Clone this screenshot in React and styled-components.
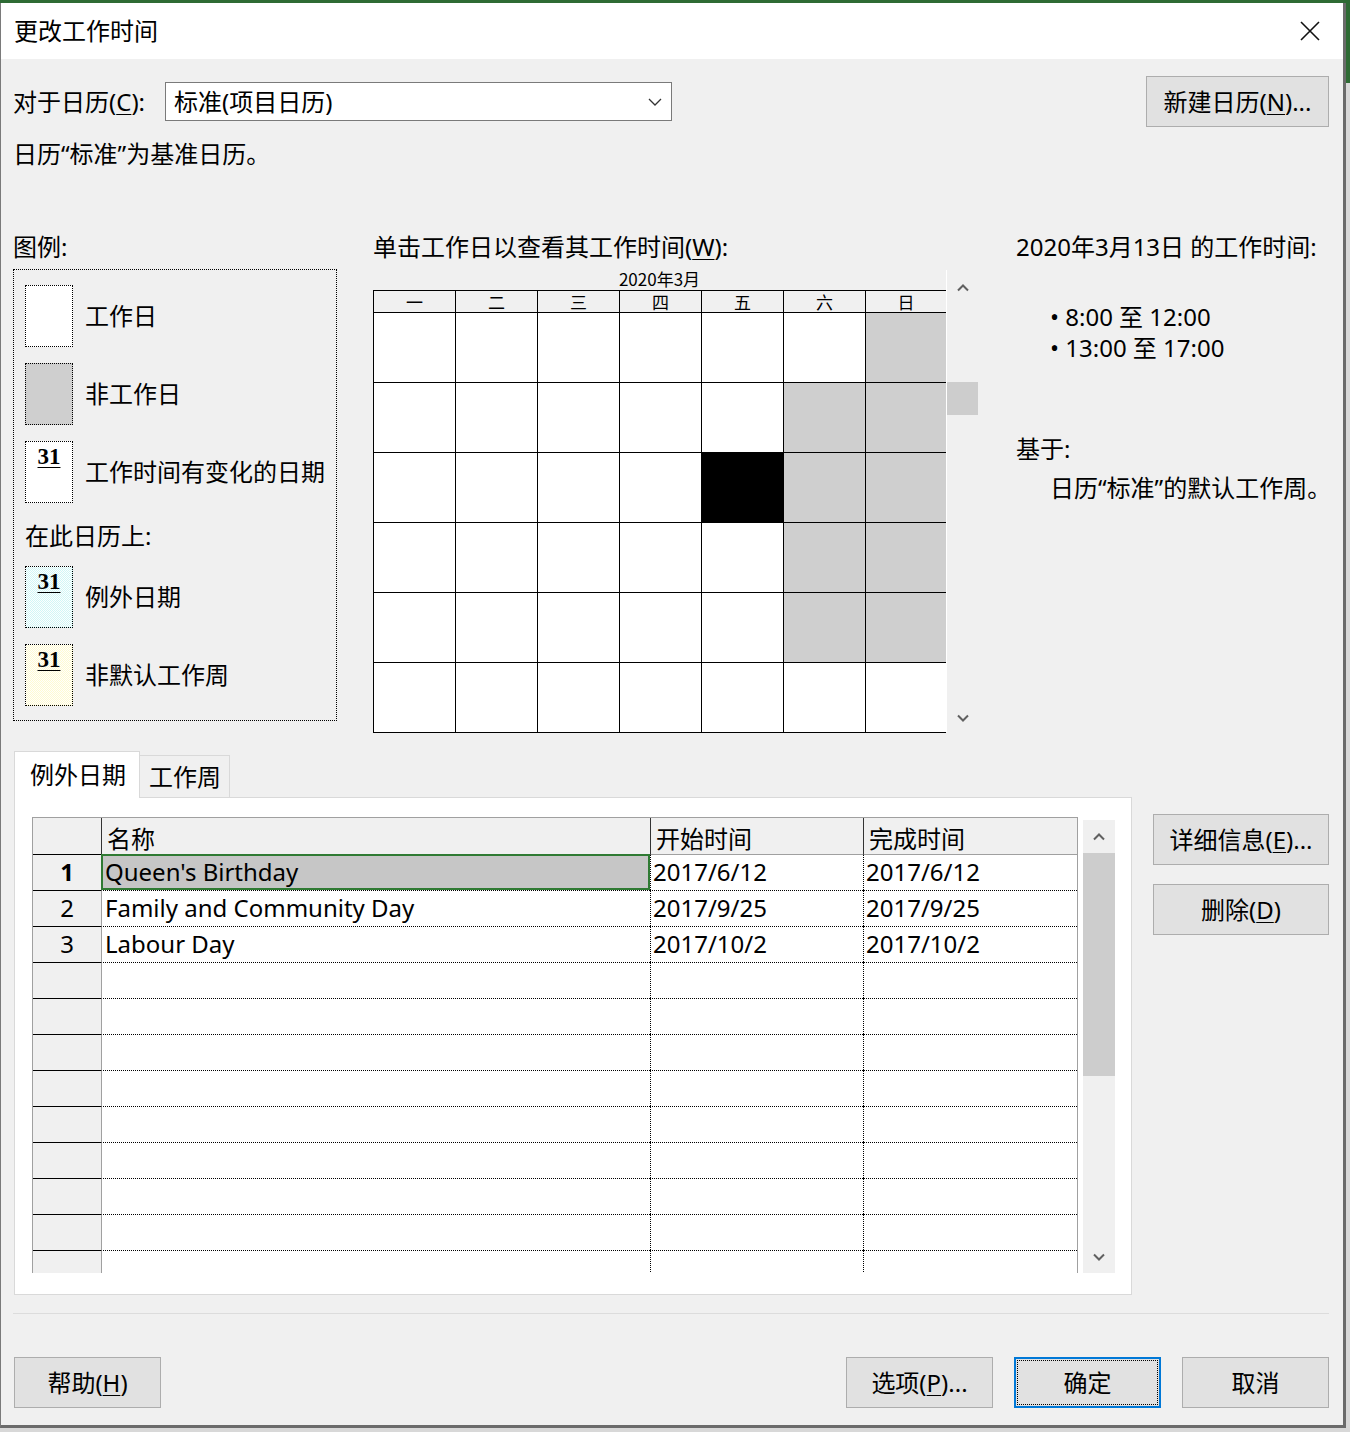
import React from "react";
import styled, { createGlobalStyle, css } from "styled-components";

const Global = createGlobalStyle`
  html, body { margin: 0; padding: 0; }
  body {
    font-family: "Noto Sans", "Noto Sans CJK SC", sans-serif;
    color: #000;
  }
  * { box-sizing: border-box; }
`;

const Screen = styled.div`
  width: 1350px;
  height: 1432px;
  overflow: hidden;
  padding-top: 3px;
  background: linear-gradient(to bottom, #2e6b34 0, #2e6b34 83px, #d8d8d8 83px);
`;

const Dialog = styled.div`
  width: 1346px;
  height: 1425px;
  display: flex;
  flex-direction: column;
  border-left: 1px solid #7a7a7a;
  border-right: 3px solid #6b6b6b;
  border-bottom: 3px solid #6b6b6b;
  background: #f0f0f0;
`;

const TitleBar = styled.div`
  height: 56px;
  flex: none;
  background: #fff;
  display: flex;
  align-items: center;
  justify-content: space-between;
  padding: 0 23px 0 13px;
  font-size: 24px;
  line-height: 30px;
`;

const Body = styled.div`
  flex: 1;
  display: flex;
  flex-direction: column;
  padding: 17px 14px 0 12px;
  font-size: 24px;
  line-height: 30px;
`;

const Key = styled.span`
  text-decoration: underline;
  text-underline-offset: 3px;
  text-decoration-thickness: 1px;
`;

const CalendarRow = styled.div`
  display: flex;
  align-items: center;
  height: 51px;
`;

const FieldLabel = styled.div`
  width: 152px;
  flex: none;
  white-space: nowrap;
`;

const Select = styled.div`
  width: 507px;
  height: 39px;
  background: #fff;
  border: 1px solid #7a7a7a;
  display: flex;
  align-items: center;
  justify-content: space-between;
  padding: 0 9px 0 8px;
`;

const Button = styled.div`
  width: ${(p) => p.$w}px;
  height: 51px;
  flex: none;
  display: flex;
  align-items: center;
  justify-content: center;
  background: #e1e1e1;
  border: 1px solid #adadad;
  white-space: nowrap;
  ${(p) =>
    p.$default &&
    css`
      border: 2px solid #0078d7;
      outline: 1px dotted #000;
      outline-offset: -4px;
    `}
`;

const PushRight = styled.div`
  margin-left: auto;
`;

const Note = styled.div`
  margin-top: 12px;
`;

const Columns = styled.div`
  display: flex;
  align-items: flex-start;
  margin-top: 63px;
`;

const LegendCol = styled.div`
  width: 324px;
  flex: none;
`;

const CalCol = styled.div`
  width: 605px;
  flex: none;
  margin-left: 36px;
`;

const InfoCol = styled.div`
  flex: 1;
  margin-left: 38px;
`;

const Heading = styled.div`
  white-space: nowrap;
`;

const LegendBox = styled.div`
  margin-top: 7px;
  width: 324px;
  height: 452px;
  border: 1px dotted #000;
  padding: 15px 0 14px 11px;
  display: flex;
  flex-direction: column;
`;

const LegendItem = styled.div`
  display: flex;
  align-items: center;
  gap: 12px;
  margin-top: ${(p) => p.$mt || 0}px;
  white-space: nowrap;
`;

const swatchBg = {
  white: "#fff",
  gray: "#cfcfcf",
  cyan: "repeating-conic-gradient(#d2f6f6 0 25%, #fcffff 0 50%) 0 0 / 2px 2px",
  yellow: "repeating-conic-gradient(#fffad2 0 25%, #fffffc 0 50%) 0 0 / 2px 2px",
};

const Swatch = styled.div`
  width: 48px;
  height: 62px;
  flex: none;
  border: 1px dotted #000;
  background: ${(p) => swatchBg[p.$kind]};
  font-family: "Liberation Serif", serif;
  font-weight: bold;
  font-size: 23px;
  line-height: 24px;
  text-align: center;
  padding-top: 3px;
`;

const DateMark = styled.span`
  text-decoration: underline;
  text-underline-offset: 3px;
  text-decoration-thickness: 1px;
`;

const SubTitle = styled.div`
  margin-top: 18px;
`;

const CalBlock = styled.div`
  display: flex;
  align-items: flex-start;
  margin-top: 6px;
`;

const CalMain = styled.div`
  width: 573px;
  flex: none;
`;

const MonthTitle = styled.div`
  height: 22px;
  line-height: 22px;
  font-family: "Noto Sans CJK SC", sans-serif;
  font-size: 17px;
  text-align: center;
`;

const CalGrid = styled.div`
  display: grid;
  grid-template-columns: repeat(6, 82px) 81px;
  grid-template-rows: 22px repeat(6, 70px);
  border-bottom: 1px solid #000;
`;

const DayHead = styled.div`
  border-left: 1px solid #000;
  border-top: 1px solid #000;
  background: #f0f0f0;
  font-family: "Noto Sans CJK SC", sans-serif;
  font-size: 17px;
  line-height: 21px;
  text-align: center;
`;

const dayBg = { work: "#fff", off: "#cfcfcf", sel: "#000" };

const DayCell = styled.div`
  border-left: 1px solid #000;
  border-top: 1px solid #000;
  background: ${(p) => dayBg[p.$kind]};
`;

const ScrollBar = styled.div`
  width: 32px;
  flex: none;
  height: ${(p) => p.$h}px;
  margin-top: ${(p) => p.$mt}px;
  margin-left: ${(p) => p.$ml || 0}px;
  background: #f0f0f0;
  border-left: ${(p) => (p.$edge ? "1px solid #fff" : "none")};
  display: flex;
  flex-direction: column;
`;

const ArrowBox = styled.div`
  height: ${(p) => p.$h}px;
  flex: none;
  display: flex;
  align-items: center;
  justify-content: center;
`;

const Thumb = styled.div`
  flex: none;
  height: ${(p) => p.$h}px;
  margin-top: ${(p) => p.$mt || 0}px;
  background: #cdcdcd;
`;

const Spacer = styled.div`
  flex: 1;
`;

const TimeList = styled.div`
  margin-top: 39px;
  padding-left: 34px;
  line-height: 31px;
  white-space: nowrap;
`;

const BasedOn = styled.div`
  margin-top: 71px;
`;

const BasedText = styled.div`
  margin-top: 9px;
  padding-left: 34px;
  white-space: nowrap;
`;

const Lower = styled.div`
  display: flex;
  align-items: flex-start;
  margin-top: 18px;
`;

const TabsArea = styled.div`
  width: 1118px;
  flex: none;
  margin-left: 1px;
`;

const TabStrip = styled.div`
  display: flex;
  align-items: flex-end;
  height: 46px;
`;

const Tab = styled.div`
  border: 1px solid #d9d9d9;
  border-bottom: none;
  white-space: nowrap;
  display: flex;
  align-items: center;
  ${(p) =>
    p.$active
      ? css`
          width: 126px;
          height: 47px;
          margin-bottom: -1px;
          background: #fff;
          padding-left: 15px;
          position: relative;
          z-index: 1;
        `
      : css`
          width: 90px;
          height: 42px;
          border-left: none;
          background: #f0f0f0;
          padding-left: 9px;
        `}
`;

const Panel = styled.div`
  border: 1px solid #d9d9d9;
  background: #fff;
  padding: 19px 16px 21px 17px;
  display: flex;
  align-items: flex-start;
`;

const Table = styled.div`
  width: 1046px;
  height: 456px;
  flex: none;
  overflow: hidden;
  border: 1px solid #a0a0a0;
  border-bottom: none;
  display: grid;
  grid-template-columns: 68px 549px 213px 214px;
  grid-auto-rows: 36px;
  align-content: start;
`;

const Corner = styled.div`
  background: #f0f0f0;
`;

const ColHead = styled.div`
  background: #f0f0f0;
  border-left: 1px solid #333;
  padding-left: 5px;
  display: flex;
  align-items: flex-end;
  white-space: nowrap;
`;

const RowNum = styled.div`
  background: #f0f0f0;
  border-top: 1px solid #000;
  text-align: center;
  line-height: 34px;
  font-weight: ${(p) => (p.$bold ? 700 : 400)};
`;

const Cell = styled.div`
  border-left: 1px ${(p) => (p.$first ? "solid #a0a0a0" : "dotted #000")};
  border-top: 1px ${(p) => (p.$top ? "solid #a0a0a0" : "dotted #000")};
  padding-left: ${(p) => (p.$first ? 3 : 2)}px;
  line-height: 34px;
  white-space: nowrap;
  overflow: hidden;
  ${(p) =>
    p.$selected &&
    css`
      background: #c6c6c6;
      outline: 2px solid #2f7a33;
      outline-offset: -2px;
    `}
`;

const SideButtons = styled.div`
  margin-left: auto;
  padding-top: 63px;
  display: flex;
  flex-direction: column;
  gap: 19px;
`;

const Separator = styled.div`
  margin-top: 18px;
  height: 1px;
  background: #dcdcdc;
`;

const Footer = styled.div`
  margin-top: 43px;
  padding-left: 1px;
  display: flex;
  align-items: center;
`;

const FooterRight = styled.div`
  margin-left: auto;
  display: flex;
  gap: 21px;
`;

const CloseIcon = () => (
  <svg width="20" height="20" viewBox="0 0 20 20">
    <path d="M1 1 L19 19 M19 1 L1 19" stroke="#111" strokeWidth="1.6" fill="none" />
  </svg>
);

const SelectChevron = () => (
  <svg width="14" height="8" viewBox="0 0 14 8">
    <polyline points="1,1 7,7 13,1" stroke="#333" strokeWidth="1.3" fill="none" />
  </svg>
);

const Caret = ({ down }) => (
  <svg width="12" height="8" viewBox="0 0 12 8">
    <polyline
      points={down ? "1,1.5 6,6.5 11,1.5" : "1,6.5 6,1.5 11,6.5"}
      stroke="#606060"
      strokeWidth="2"
      fill="none"
    />
  </svg>
);

const weekdays = ["一", "二", "三", "四", "五", "六", "日"];

const calRows = [
  ["work", "work", "work", "work", "work", "work", "off"],
  ["work", "work", "work", "work", "work", "off", "off"],
  ["work", "work", "work", "work", "sel", "off", "off"],
  ["work", "work", "work", "work", "work", "off", "off"],
  ["work", "work", "work", "work", "work", "off", "off"],
  ["work", "work", "work", "work", "work", "work", "work"],
];

const exceptions = [
  { name: "Queen's Birthday", start: "2017/6/12", end: "2017/6/12" },
  { name: "Family and Community Day", start: "2017/9/25", end: "2017/9/25" },
  { name: "Labour Day", start: "2017/10/2", end: "2017/10/2" },
];

const TOTAL_ROWS = 12;

export default function App() {
  const rows = Array.from({ length: TOTAL_ROWS }, (_, i) => exceptions[i] || null);
  return (
    <Screen>
      <Global />
      <Dialog>
        <TitleBar>
          <span>更改工作时间</span>
          <CloseIcon />
        </TitleBar>
        <Body>
          <CalendarRow>
            <FieldLabel>
              对于日历(<Key>C</Key>):
            </FieldLabel>
            <Select>
              <span>标准(项目日历)</span>
              <SelectChevron />
            </Select>
            <PushRight>
              <Button $w={183}>
                新建日历(<Key>N</Key>)...
              </Button>
            </PushRight>
          </CalendarRow>
          <Note>日历“标准”为基准日历。</Note>

          <Columns>
            <LegendCol>
              <Heading>图例:</Heading>
              <LegendBox>
                <LegendItem>
                  <Swatch $kind="white" />
                  工作日
                </LegendItem>
                <LegendItem $mt={16}>
                  <Swatch $kind="gray" />
                  非工作日
                </LegendItem>
                <LegendItem $mt={16}>
                  <Swatch $kind="white">
                    <DateMark>31</DateMark>
                  </Swatch>
                  工作时间有变化的日期
                </LegendItem>
                <SubTitle>在此日历上:</SubTitle>
                <LegendItem $mt={15}>
                  <Swatch $kind="cyan">
                    <DateMark>31</DateMark>
                  </Swatch>
                  例外日期
                </LegendItem>
                <LegendItem $mt={16}>
                  <Swatch $kind="yellow">
                    <DateMark>31</DateMark>
                  </Swatch>
                  非默认工作周
                </LegendItem>
              </LegendBox>
            </LegendCol>

            <CalCol>
              <Heading>
                单击工作日以查看其工作时间(<Key>W</Key>):
              </Heading>
              <CalBlock>
                <CalMain>
                  <MonthTitle>2020年3月</MonthTitle>
                  <CalGrid>
                    {weekdays.map((d) => (
                      <DayHead key={d}>{d}</DayHead>
                    ))}
                    {calRows.map((r, ri) =>
                      r.map((k, ci) => <DayCell key={`${ri}-${ci}`} $kind={k} />)
                    )}
                  </CalGrid>
                </CalMain>
                <ScrollBar $h={462} $mt={2} $edge>
                  <ArrowBox $h={36}>
                    <Caret />
                  </ArrowBox>
                  <Thumb $h={33} $mt={76} />
                  <Spacer />
                  <ArrowBox $h={28}>
                    <Caret down />
                  </ArrowBox>
                </ScrollBar>
              </CalBlock>
            </CalCol>

            <InfoCol>
              <Heading>2020年3月13日 的工作时间:</Heading>
              <TimeList>
                <div>• 8:00 至 12:00</div>
                <div>• 13:00 至 17:00</div>
              </TimeList>
              <BasedOn>基于:</BasedOn>
              <BasedText>日历“标准”的默认工作周。</BasedText>
            </InfoCol>
          </Columns>

          <Lower>
            <TabsArea>
              <TabStrip>
                <Tab $active>例外日期</Tab>
                <Tab>工作周</Tab>
              </TabStrip>
              <Panel>
                <Table>
                  <Corner />
                  <ColHead>名称</ColHead>
                  <ColHead>开始时间</ColHead>
                  <ColHead>完成时间</ColHead>
                  {rows.map((r, i) => (
                    <React.Fragment key={i}>
                      <RowNum $bold={i === 0}>{r ? i + 1 : ""}</RowNum>
                      <Cell $first $top={i === 0} $selected={i === 0}>
                        {r ? r.name : ""}
                      </Cell>
                      <Cell $top={i === 0}>{r ? r.start : ""}</Cell>
                      <Cell $top={i === 0}>{r ? r.end : ""}</Cell>
                    </React.Fragment>
                  ))}
                </Table>
                <ScrollBar $h={453} $mt={3} $ml={5}>
                  <ArrowBox $h={33}>
                    <Caret />
                  </ArrowBox>
                  <Thumb $h={223} />
                  <Spacer />
                  <ArrowBox $h={33}>
                    <Caret down />
                  </ArrowBox>
                </ScrollBar>
              </Panel>
            </TabsArea>
            <SideButtons>
              <Button $w={176}>
                详细信息(<Key>E</Key>)...
              </Button>
              <Button $w={176}>
                删除(<Key>D</Key>)
              </Button>
            </SideButtons>
          </Lower>

          <Separator />

          <Footer>
            <Button $w={147}>
              帮助(<Key>H</Key>)
            </Button>
            <FooterRight>
              <Button $w={147}>
                选项(<Key>P</Key>)...
              </Button>
              <Button $w={147} $default>
                确定
              </Button>
              <Button $w={147}>取消</Button>
            </FooterRight>
          </Footer>
        </Body>
      </Dialog>
    </Screen>
  );
}
